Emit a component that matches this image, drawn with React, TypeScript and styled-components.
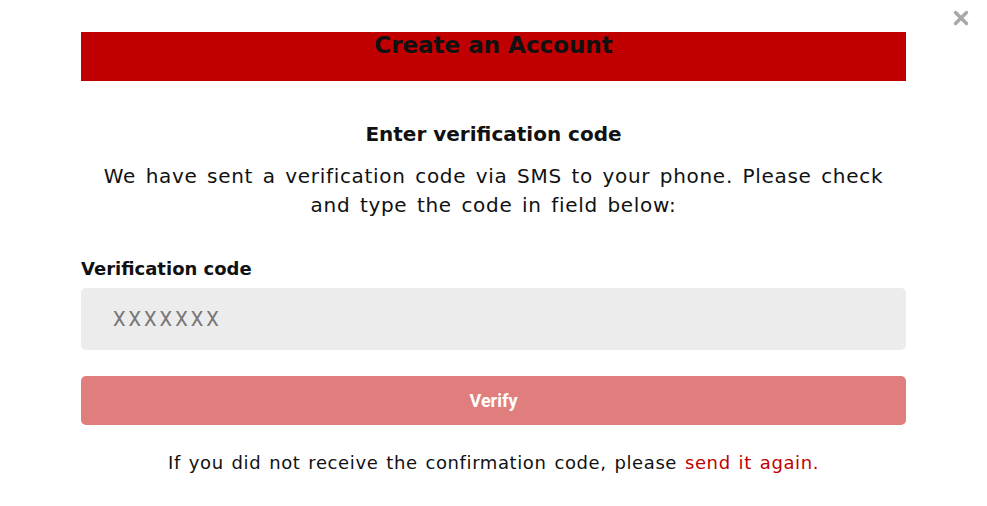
import * as React from "react";
import styled, { createGlobalStyle } from "styled-components";

const Global = createGlobalStyle`
  html, body {
    margin: 0;
    padding: 0;
    background: #fff;
    font-family: "DejaVu Sans", "Noto Sans", sans-serif;
    color: #111;
  }
`;

const Page = styled.div`
  position: relative;
  width: 987px;
  height: 506px;
  padding: 32px 81px 0;
  box-sizing: border-box;
`;

const Close = styled.button`
  position: absolute;
  top: 10px;
  right: 18px;
  width: 16px;
  height: 16px;
  border: 0;
  background: none;
  padding: 0;
  color: #a8a8a8;
  cursor: pointer;
  display: flex;
`;

const Header = styled.div`
  height: 49px;
  background-color: #c00000;
  text-align: center;
  font-size: 23px;
  font-weight: 700;
  line-height: 26px;
  color: #111;
`;

const Body = styled.div`
  display: flex;
  flex-direction: column;
  align-items: center;
  padding-top: 39px;
`;

const Heading = styled.div`
  font-size: 20px;
  font-weight: 700;
  line-height: 28px;
`;

const Text = styled.p`
  margin: 14px 0 0;
  font-size: 20px;
  line-height: 29px;
  letter-spacing: 0.7px;
  word-spacing: 2.5px;
  text-align: center;
  max-width: 800px;
`;

const Form = styled.div`
  align-self: stretch;
  display: flex;
  flex-direction: column;
  margin-top: 37px;
`;

const Label = styled.label`
  font-size: 18px;
  font-weight: 700;
  line-height: 24px;
  margin-bottom: 7px;
`;

const Input = styled.input`
  height: 62px;
  border: 0;
  border-radius: 5px;
  background: #ececec;
  padding: 0 32px;
  font-family: Roboto, sans-serif;
  font-size: 20px;
  letter-spacing: 3px;
  outline: none;
  &::placeholder {
    color: #777;
  }
`;

const Button = styled.button`
  margin-top: 26px;
  height: 49px;
  border: 0;
  border-radius: 5px;
  background: #e07e7e;
  color: #fff;
  font-family: Roboto, sans-serif;
  font-size: 18px;
  font-weight: 700;
`;

const Footer = styled.p`
  margin: 26px 0 0;
  font-size: 18px;
  line-height: 24px;
  letter-spacing: 0.6px;
  word-spacing: 1.6px;
  text-align: center;
`;

const Link = styled.a`
  color: #c00000;
  text-decoration: none;
`;

export default function App() {
  return (
    <>
      <Global />
      <Page>
        <Close aria-label="close">
          <svg width="16" height="16" viewBox="0 0 16 16">
            <path
              d="M2.5 2.5 L13.5 13.5 M13.5 2.5 L2.5 13.5"
              stroke="currentColor"
              strokeWidth="3.4"
              strokeLinecap="round"
            />
          </svg>
        </Close>
        <Header>Create an Account</Header>
        <Body>
          <Heading>Enter verification code</Heading>
          <Text>
            We have sent a verification code via SMS to your phone. Please check
            and type the code in field below:
          </Text>
          <Form>
            <Label>Verification code</Label>
            <Input placeholder="XXXXXXX" />
            <Button>Verify</Button>
            <Footer>
              If you did not receive the confirmation code, please{" "}
              <Link href="#">send it again.</Link>
            </Footer>
          </Form>
        </Body>
      </Page>
    </>
  );
}
